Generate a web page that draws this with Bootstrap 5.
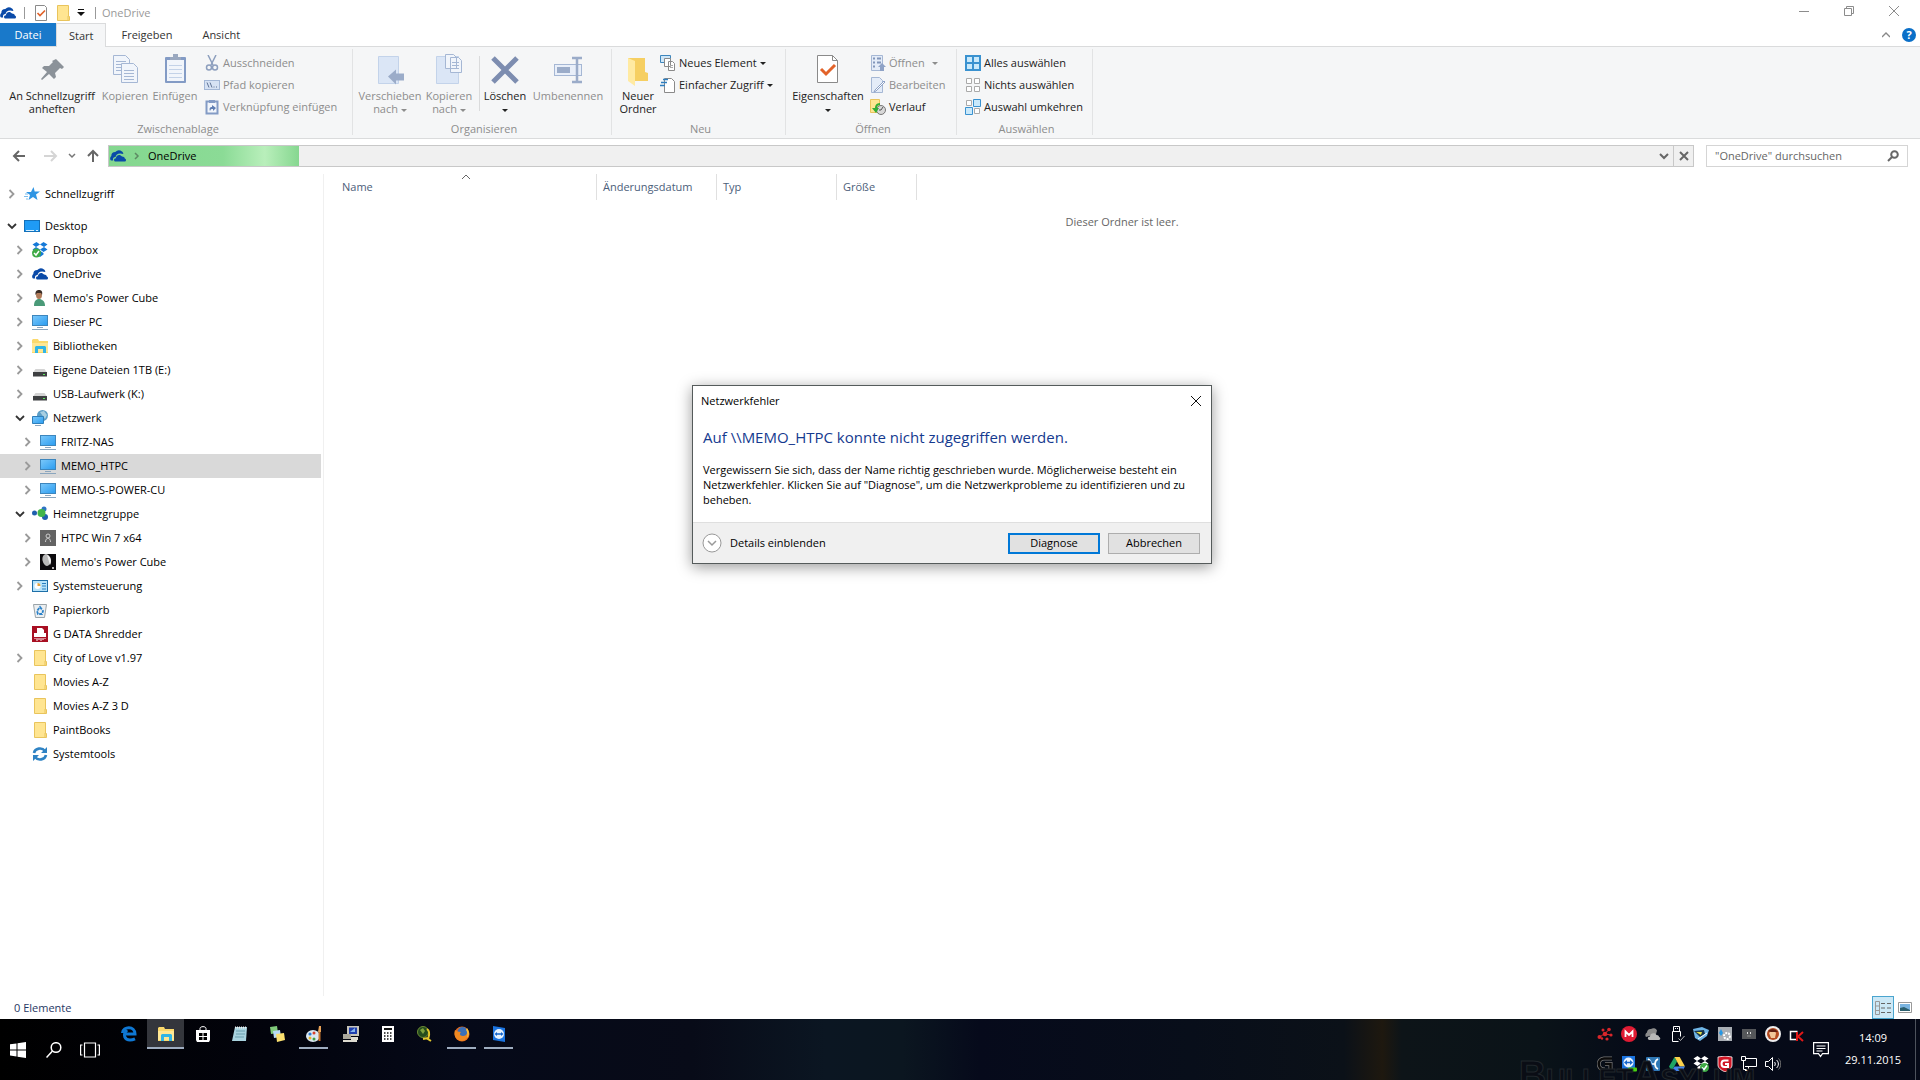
<!DOCTYPE html>
<html lang="de">
<head>
<meta charset="utf-8">
<meta name="viewport" content="width=device-width, initial-scale=1">
<title>OneDrive</title>
<link href="https://cdn.jsdelivr.net/npm/bootstrap@5.3.0/dist/css/bootstrap.min.css" rel="stylesheet">
<style>
body{font-family:"Open Sans","Noto Sans",sans-serif;font-size:11px;line-height:16px;color:#000;background:#fff;height:100vh;overflow:hidden}
svg{flex:none;display:block}
button{background:none;border:0;padding:0;color:inherit;font:inherit}
a{color:inherit;text-decoration:none}
.i16{width:16px;height:16px}
.i32{width:32px;height:32px}
/* title bar and tabs */
.title-strip{height:23px}
.quick{gap:8px;padding-top:2px}
.quick-tools{gap:6px}
.qsep{width:1px;height:12px;background:#999}
.title-text{color:#999}
.win-btn{width:45px;height:21px;display:flex;align-items:center;justify-content:center}
.tab-strip{height:24px;border-bottom:1px solid #dadbdc}
.tab-item{height:24px;padding:0 15px;line-height:23px;color:#333}
.tab-file{width:56px;padding:0;text-align:center;background:#1979ca;color:#fff;height:23px}
.tab-open{padding:0 12px;background:#f5f6f7;border:1px solid #dadbdc;border-bottom:0}
.tab-tools{gap:12px}
/* ribbon */
.ribbon{background:#f5f6f7;height:92px;border-bottom:1px solid #dadbdc;color:#222}
.rgroup{border-right:1px solid #e2e3e4;margin:2px 0 3px;padding-left:4px;display:flex;flex-direction:column;justify-content:space-between}
.rgroup-name{color:#8d8d8d;text-align:center;line-height:13px}
.big-btn{padding-top:5px;line-height:13px;display:flex;flex-direction:column;align-items:center;gap:3px;text-align:center}
.w96{width:96px}.w76{width:76px}.w66{width:66px}.w52{width:52px}.w50{width:50px}.w44{width:44px}
.small-col{padding-top:3px}
.small-btn{height:22px;display:flex;align-items:center;gap:3px;white-space:nowrap}
.off{color:#8d8d8d}
.gw1{width:353px}.gw2{width:259px}.gw3{width:174px}.gw4{width:171px}.gw5{width:136px}
.inner-sep{width:1px;height:55px;background:#dadbdc;margin:7px 0 0}
.tri{display:inline-block;border:3px solid transparent;border-top:3px solid currentColor;border-bottom:0;vertical-align:middle}
/* address row */
.addr-row{height:35px;padding:6px 12px 7px 10px}
.addr-box{height:22px;border:1px solid #c8c8c8;background:#f0f0f0}
.addr-fill{width:190px;height:20px;background:linear-gradient(90deg,#84d78f 0,#8bdb96 60%,#b9efbb 82%,#86d790 100%);padding-left:1px;gap:7px}
.nav-btn{width:22px;display:flex;justify-content:center}
.stop-btn{width:20px;border-left:1px solid #c8c8c8;display:flex;align-items:center;justify-content:center}
.search-box{width:202px;height:22px;border:1px solid #d5d5d5;padding:0 8px;margin-left:12px}
.search-box input{border:0;outline:0;width:100%;min-width:0;padding:0;background:none;font:inherit;color:#666}
.search-box input::placeholder{color:#666;opacity:1}
/* tree */
.navpane{flex:none;width:324px;border-right:1px solid #f0f0f0;padding:8px 2px 0 0}
.tree-row{height:24px;display:flex;align-items:center;padding-left:4px;white-space:nowrap}
.lv1{padding-left:12px}.lv2{padding-left:20px}
.tree-row.picked{background:#d9d9d9}
.chev{width:16px;height:16px;margin-right:4px;color:#9a9a9a}
.chev.opened{color:#333}
.tree-row a{padding-left:5px}
/* list */
.filelist{table-layout:fixed;border-collapse:separate;border-spacing:0}
.filelist th{font-weight:400;color:#4c607a;height:26px;padding:0 0 0 6px;border-right:1px solid #e0e0e0;position:relative}
.filelist th:first-child{width:273px;padding-left:18px}
.filelist th:nth-child(2),.filelist th:nth-child(3){width:120px}
.filelist th:nth-child(4){width:80px}
.filelist th:last-child{border:0}
.filelist td{text-align:center;color:#666;padding-top:14px}
.sort{position:absolute;left:136px;top:0}
.statusbar{height:23px;color:#1f3864;padding-left:14px}
.view-btn{width:22px;height:23px;display:flex;align-items:center;justify-content:center}
.view-btn.active{background:#cce8f6;border:1px solid #4aa5cf}
/* dialog */
.dlg{position:absolute;left:692px;top:385px;width:520px;background:#fff;border:1px solid #555b5b;box-shadow:0 3px 14px rgba(0,0,0,.4)}
.dlg-title{height:30px;padding:0 9px 0 8px}
.dlg h1{font-size:15px;line-height:22px;color:#153a8f;margin:0;font-weight:400}
.dlg-text{padding:10px 10px 15px}
.dlg-text p{line-height:15px;margin:14px 0 0}
.dlg-foot{height:41px;background:#f0f0f0;border-top:1px solid #dfdfdf;padding:0 11px 0 9px}
.dlg-btn{width:92px;height:21px;border:1px solid #adadad;background:#e1e1e1}
.dlg-btn.main{border:2px solid #0078d7}
/* taskbar */
.taskbar{height:61px;color:#fff;background:linear-gradient(90deg,#000 0,#02030c 14%,#050918 24%,#080b18 36%,#0b1622 43%,#0b1620 47%,#060a1b 51%,#080e1a 62%,#0b1118 70%,#1e180f 72%,#0d1418 73%,#0a1318 80%,#050a18 86%,#060a18 100%);position:relative}
.sys-btn{flex:none;width:36px;display:flex;align-items:center;justify-content:center}
.apps{height:30px;padding-left:2px}
.app-btn{flex:none;width:37px;display:flex;justify-content:center;padding-top:7px;border-bottom:2px solid transparent}
.app-btn.running{width:29px;margin:0 4px;border-bottom-color:#9fadc0}
.app-btn.current{width:37px;margin:0;background:#34363c}
.tray{flex:none;width:216px}
.tray button{width:24px;height:30px;display:flex;align-items:center;justify-content:center}
.note-btn{margin:0 2px 0 4px}
.wmark{position:absolute;right:165px;bottom:-14px;font:bold 38px/38px "Liberation Sans",sans-serif;font-variant:small-caps;color:#0a0d15;-webkit-text-stroke:1px #20262b}
.clock{width:84px;text-align:center;line-height:22px;padding-top:8px}
.edge-line{width:1px;background:#4d525c;margin-right:4px}
</style>
<script src="https://cdn.jsdelivr.net/npm/bootstrap@5.3.0/dist/js/bootstrap.bundle.min.js"></script>
</head>
<body class="d-flex flex-column">
<svg width="0" height="0" class="position-absolute" aria-hidden="true">
<defs>
<linearGradient id="scr" x1="0" y1="0" x2="1" y2="1"><stop offset="0" stop-color="#7cc9fb"/><stop offset="1" stop-color="#2a9cf0"/></linearGradient>
<symbol id="cloud" viewBox="0 0 16 16"><path d="M1 12.500a3 3 0 0 1 .3-4.500 4 4 0 0 1 4-4A5 5 0 0 1 12 3.500c1 .7 1.300 1.500 1.300 2.500-5-1.500-7.300.5-7.800 3-2.500.3-2.800 2-2.300 3.500z" fill="#0a4aa8"/><path d="M5.500 13.500c-2-.2-2-3.200.4-3.300C6 7 10 5.500 12 8.600c2 0 2.800 1 2.800 2 1.800.4 1.500 2.900-.3 2.900z" fill="#0a4aa8"/></symbol>
<symbol id="gcloud" viewBox="0 0 16 16"><path d="M1 11a3 3 0 0 1 1-4.500A3.500 3.500 0 0 1 6 3a4 4 0 0 1 6 1.500L11 8z" fill="#8c8c8c"/><path d="M4.500 14c-2.500-.5-2-3.500.5-3.500C5 7 10 6 11.500 9c2 0 2.500 1 2.500 2 2 .5 1.500 3-.3 3z" fill="#b8b8b8"/></symbol>
<symbol id="folder" viewBox="0 0 16 16"><path d="M2.500.5h11v11h1v4h-12z" fill="#ffe591" stroke="#e9c45c"/><path d="M13 15.500v-4.500" stroke="#e9c45c"/></symbol>
<symbol id="doccheck" viewBox="0 0 16 16"><path d="M2.500.5h9l2 2v13h-11z" fill="#fff" stroke="#8a8a8a"/><path d="M4.500 8l2.500 2.500 5-5" fill="none" stroke="#e2632a" stroke-width="1.700"/></symbol>
<symbol id="pc" viewBox="0 0 16 16"><rect x=".5" y="1.500" width="15" height="10" fill="url(#scr)" stroke="#3d86bd"/><path d="M5 13.500h6M0 15.500h16" stroke="#8ba6be"/></symbol>
<symbol id="drive" viewBox="0 0 16 16"><path d="M3.500 7h9l2.500 3.500H1z" fill="#d4d4d4"/><rect x="1" y="10" width="14" height="4.500" fill="#3e4042"/><rect x="11" y="12" width="2" height="1" fill="#5fea5f"/></symbol>
<symbol id="cr" viewBox="0 0 16 16"><path d="M5.500 4L9.500 8l-4 4" fill="none" stroke="currentColor" stroke-width="1.800"/></symbol>
<symbol id="cd" viewBox="0 0 16 16"><path d="M4 6l4 4 4-4" fill="none" stroke="currentColor" stroke-width="1.800"/></symbol>
<symbol id="explorer" viewBox="0 0 16 16"><path d="M0 2l1-1h5l1 2h9v12H0z" fill="#fbd96c"/><path d="M0 5h16v9H0z" fill="#ffe795"/><path d="M3 15V9l1-1h9l1 1v6h-3v-4H6v4z" fill="#31b5e6"/></symbol>
<symbol id="dropbx" viewBox="0 0 16 16"><path d="M4.500 0L8 2.500 4 5 .5 2.500zM11.500 0L8 2.500 12 5l3.500-2.500zM4 5l4 2.500L4.500 10 .5 7.500zM12 5l3.500 2.500-4 2.500L8 7.500zM4.500 11L8 8.800l3.500 2.200v1.500L8 15l-3.500-2.500z" fill="currentColor"/></symbol>
</defs>
</svg>

<header>
<div class="title-strip d-flex justify-content-between">
 <div class="quick d-flex align-items-center">
  <svg class="i16"><use href="#cloud"/></svg>
  <span class="qsep"></span>
  <div class="quick-tools d-flex align-items-center">
   <button aria-label="Eigenschaften"><svg class="i16"><use href="#doccheck"/></svg></button>
   <button aria-label="Neuer Ordner"><svg class="i16"><use href="#folder"/></svg></button>
   <button aria-label="Symbolleiste anpassen"><svg width="8" height="8" viewBox="0 0 8 8"><path d="M1 .5h6" stroke="#111"/><path d="M0 3h8L4 7z" fill="#111"/></svg></button>
   <span class="qsep ms-1"></span>
   <span class="title-text">OneDrive</span>
  </div>
 </div>
 <div class="d-flex me-1">
  <button class="win-btn" aria-label="Minimieren"><svg width="10" height="10"><path d="M0 5.500h10" stroke="#8c8c8c"/></svg></button>
  <button class="win-btn" aria-label="Verkleinern"><svg width="10" height="10" fill="none" stroke="#8c8c8c"><path d="M.5 2.500h7v7h-7zM2.500 2.500v-2h7v7h-2"/></svg></button>
  <button class="win-btn" aria-label="Schließen"><svg width="10" height="10" stroke="#8c8c8c"><path d="M0 0l10 10M10 0L0 10"/></svg></button>
 </div>
</div>
<nav class="tab-strip d-flex">
 <a href="#" class="tab-item tab-file">Datei</a>
 <a href="#" class="tab-item tab-open">Start</a>
 <a href="#" class="tab-item">Freigeben</a>
 <a href="#" class="tab-item">Ansicht</a>
 <div class="tab-tools ms-auto d-flex align-items-center pe-1">
  <button aria-label="Menüband minimieren"><svg width="8" height="6"><path d="M0 5l4-4 4 4" fill="none" stroke="#888" stroke-width="1.300"/></svg></button>
  <button aria-label="Hilfe"><svg width="14" height="14"><circle cx="7" cy="7" r="7" fill="#0a6fc8"/><text x="7" y="11" font-size="11" font-weight="700" fill="#fff" text-anchor="middle">?</text></svg></button>
 </div>
</nav>
<div class="ribbon d-flex">
 <section class="rgroup gw1">
  <div class="d-flex">
   <button class="big-btn w96"><svg class="i32" viewBox="0 0 32 32"><path d="M20 5l8 8-2 2-2-1-5 5 1 4-2 2-5-5-7 6-1-1 6-7-5-4 2-2h5l4-4-1-1z" fill="#8b9299"/></svg>An Schnellzugriff anheften</button>
   <button class="big-btn w50 off"><svg class="i32" viewBox="0 0 32 32" fill="#f1f5fb" stroke="#a5b7d4"><path d="M4.500 1.500h12l4 4v15h-16z"/><path d="M7 7.500h10M7 10.500h10M7 13.500h10M7 16.500h10"/><path d="M12.500 9.500h12l4 4v15h-16z"/><path d="M15 16.500h10M15 19.500h10M15 22.500h10M15 25.500h10"/></svg>Kopieren</button>
   <button class="big-btn w50 off"><svg class="i32" viewBox="0 0 32 32"><rect x="6" y="3" width="21" height="26" rx="1" fill="#839bc5"/><path d="M8 6h17v21H8z" fill="#f1f5fb"/><path d="M11 6V3h3V0h5v3h3v3z" fill="#9aa8bf"/><path d="M10 11.500h13M10 15.500h13M10 19.500h13M10 23.500h13" stroke="#c3d2e8"/></svg>Einfügen</button>
   <div class="small-col ps-1">
    <button class="small-btn off"><svg class="i16" viewBox="0 0 16 16" fill="none" stroke="#8d9fbe" stroke-width="1.500"><path d="M4 0l5 10M12 0L7 10"/><circle cx="5" cy="12.500" r="2.500"/><circle cx="11" cy="12.500" r="2.500"/></svg>Ausschneiden</button>
    <button class="small-btn off"><svg class="i16" viewBox="0 0 16 16"><rect x=".5" y="3.500" width="15" height="9" fill="#d6e2f4" stroke="#a3b7d6"/><path d="M3 5.500l2 5M6 5.500l2 5M9.500 10h1M12 10h1" stroke="#5f7396"/></svg>Pfad kopieren</button>
    <button class="small-btn off"><svg class="i16" viewBox="0 0 16 16"><path d="M2.500 2.500h11v12h-11z" fill="#f1f5fb" stroke="#839bc5" stroke-width="2"/><path d="M5 1h6v3H5z" fill="#839bc5"/><path d="M6 12c-1-3 0-4 2-4V6l4 3-3 3v-2c-2 0-2 0-3 2z" fill="#5e7db2"/></svg>Verknüpfung einfügen</button>
   </div>
  </div>
  <div class="rgroup-name">Zwischenablage</div>
 </section>
 <section class="rgroup gw2">
  <div class="d-flex">
   <button class="big-btn w66 off"><svg class="i32" viewBox="0 0 32 32"><path d="M4.500 2.500h20v27h-20z" fill="#dbe6f6" stroke="#c3d3ea"/><path d="M14 22.500l8-7v4h8v7h-8v4z" fill="#9bacc9"/></svg><span>Verschieben nach <i class="tri"></i></span></button>
   <button class="big-btn w52 off"><svg class="i32" viewBox="0 0 32 32" stroke="#a5b7d4"><path d="M3.500 2.500h22v27h-22z" fill="#dbe6f6" stroke="#c3d3ea"/><path d="M12.500.5h8l3 3v11h-11zM17.500 3.500h8l3 3v12h-11z" fill="#f1f5fb"/><path d="M19 8.500h7M19 11.500h7M19 14.500h7" /></svg><span>Kopieren nach <i class="tri"></i></span></button>
   <span class="inner-sep ms-1"></span>
   <button class="big-btn w50"><svg class="i32" viewBox="0 0 32 32"><path d="M4 4l24 24M28 4L4 28" stroke="#7d8db0" stroke-width="5"/></svg><span>Löschen<br><i class="tri"></i></span></button>
   <button class="big-btn w76 off"><svg class="i32" viewBox="0 0 32 32"><rect x="2.500" y="10.500" width="27" height="11" fill="#e9eff9" stroke="#a5b7d4"/><rect x="5" y="13" width="13" height="6" fill="#9bacc9"/><path d="M20 4h10M20 28h10M25 4v24" stroke="#9bacc9" stroke-width="2.500"/></svg>Umbenennen</button>
  </div>
  <div class="rgroup-name">Organisieren</div>
 </section>
 <section class="rgroup gw3">
  <div class="d-flex">
   <button class="big-btn w44"><svg class="i32" viewBox="0 0 32 32"><path d="M6 4h17v14l3 1v8H6z" fill="#f6cf62"/><path d="M6 4l7 3v25l-7-5z" fill="#ffeaa2"/></svg>Neuer Ordner</button>
   <div class="small-col">
    <button class="small-btn"><svg class="i16" viewBox="0 0 16 16"><path d="M.5.500h10v7H.5z" fill="#cfe7f8" stroke="#3d86bd"/><path d="M4.500 3.500h6v8h-6zM8.500 6.500h4l2 2v7h-6z" fill="#fff" stroke="#8a8a8a"/><path d="M10 10.500h3M10 12.500h3" stroke="#aaa"/></svg>Neues Element <i class="tri"></i></button>
    <button class="small-btn"><svg class="i16" viewBox="0 0 16 16"><path d="M4.500 1.500h7l3 3v11h-10z" fill="#fff" stroke="#8a8a8a"/><path d="M3 2.500h5M1 5.500h6M0 8.500h5" stroke="#2f7fc0" stroke-width="1.500"/></svg>Einfacher Zugriff <i class="tri"></i></button>
   </div>
  </div>
  <div class="rgroup-name">Neu</div>
 </section>
 <section class="rgroup gw4">
  <div class="d-flex">
   <button class="big-btn w76"><svg class="i32" viewBox="0 0 32 32"><path d="M5.500 1.500h15l5 5v22h-20z" fill="#fff" stroke="#8a8a8a"/><path d="M20.500 1.500v5h5" fill="none" stroke="#8a8a8a"/><path d="M9 15l5 5 9-9" fill="none" stroke="#e2632a" stroke-width="3"/></svg><span>Eigenschaften<br><i class="tri"></i></span></button>
   <div class="small-col ps-1">
    <button class="small-btn off"><svg class="i16" viewBox="0 0 16 16"><path d="M1.500.5h11v15h-11z" fill="#e4ecf8" stroke="#a5b7d4"/><path d="M3 3.500h2M7 3.500h4M3 7.500h2M7 7.500h4M3 11.500h2" stroke="#8296ba" stroke-width="2"/><path d="M8 12l4-4 4 4h-2v4h-4v-4z" fill="#8ea2c6"/></svg>Öffnen <i class="tri ms-1"></i></button>
    <button class="small-btn off"><svg class="i16" viewBox="0 0 16 16"><path d="M1.500.5h8l3 3v12h-11z" fill="#e4ecf8" stroke="#a5b7d4"/><path d="M15 5l-9 9-2 1 1-2 9-9z" fill="#fff" stroke="#8ea2c6"/></svg>Bearbeiten</button>
    <button class="small-btn"><svg class="i16" viewBox="0 0 16 16"><path d="M.5.500h9v13h-9z" fill="#ffe591" stroke="#e9c45c"/><circle cx="11" cy="11" r="4.500" fill="#d8d8d8" stroke="#777"/><path d="M11 11l2-3M11 11H9" stroke="#555"/><path d="M10 4C6 4 5 7 5 9H2l4 5 3-5H7c0-2 1-3 3-3z" fill="#35ad35"/></svg>Verlauf</button>
   </div>
  </div>
  <div class="rgroup-name">Öffnen</div>
 </section>
 <section class="rgroup gw5">
  <div class="small-col ps-1">
   <button class="small-btn"><svg class="i16" viewBox="0 0 16 16"><path d="M1 1h14v14H1zM8 1v14M1 8h14" fill="#c9e9fb" stroke="#3a92d0" stroke-width="2"/></svg>Alles auswählen</button>
   <button class="small-btn"><svg class="i16" viewBox="0 0 16 16"><path d="M1.500 1.500h5v5h-5zM9.500 1.500h5v5h-5zM1.500 9.500h5v5h-5zM9.500 9.500h5v5h-5z" fill="#fff" stroke="#aaa"/></svg>Nichts auswählen</button>
   <button class="small-btn"><svg class="i16" viewBox="0 0 16 16"><path d="M1.500 1.500h5v5h-5zM9.500 9.500h5v5h-5z" fill="#fff" stroke="#aaa"/><path d="M8.500.5h7v7h-7zM.5 8.500h7v7h-7z" fill="#c9e9fb" stroke="#3a92d0"/></svg>Auswahl umkehren</button>
  </div>
  <div class="rgroup-name">Auswählen</div>
 </section>
</div>
</header>

<div class="addr-row d-flex align-items-center">
 <button class="me-3" aria-label="Zurück"><svg width="18" height="16" fill="none" stroke="#666" stroke-width="2"><path d="M15 8H4M9 3L4 8l5 5"/></svg></button>
 <button class="me-2" aria-label="Vorwärts"><svg width="14" height="16" fill="none" stroke="#d5d5d5" stroke-width="2"><path d="M0 8h11M7 3l5 5-5 5"/></svg></button>
 <button aria-label="Verlauf"><svg width="12" height="16" fill="none" stroke="#777" stroke-width="1.500"><path d="M3 6l3 3 3-3"/></svg></button>
 <button class="nav-btn ms-1 me-1" aria-label="Nach oben"><svg width="14" height="16" fill="none" stroke="#666" stroke-width="2"><path d="M7 14V3M2 8l5-5 5 5"/></svg></button>
 <div class="addr-box d-flex flex-fill">
  <div class="addr-fill d-flex align-items-center"><svg class="i16"><use href="#cloud"/></svg><svg width="8" height="16" fill="none" stroke="#5d8a63" stroke-width="1.500"><path d="M2 5l3 3-3 3"/></svg><a href="#">OneDrive</a></div>
  <button class="ms-auto me-1" aria-label="Verlauf der Adressleiste"><svg width="10" height="8" fill="none" stroke="#666" stroke-width="2"><path d="M1 2l4 4 4-4"/></svg></button>
  <button class="stop-btn" aria-label="Laden abbrechen"><svg width="10" height="10" stroke="#666" stroke-width="2"><path d="M1 1l8 8M9 1L1 9"/></svg></button>
 </div>
 <label class="search-box d-flex align-items-center"><input type="text" aria-label="OneDrive durchsuchen" placeholder="&quot;OneDrive&quot; durchsuchen"><svg width="12" height="12" fill="none" stroke="#666" stroke-width="2"><circle cx="7.500" cy="4.500" r="3.300"/><path d="M5 7l-4 4"/></svg></label>
</div>

<main class="d-flex flex-fill">
<ul class="navpane list-unstyled mb-0">
 <li class="tree-row mb-2"><svg class="chev"><use href="#cr"/></svg><svg class="i16" viewBox="0 0 16 16"><path d="M9.500 1l1.200 4.500H16l-4 3 1.500 5.500-4.500-3-4.500 3L6 9 2 6h5z" fill="#2f95e3"/><path d="M1 8h3M0 10.500h4M2 13h2" stroke="#7dbdec"/></svg><a href="#">Schnellzugriff</a></li>
 <li class="tree-row"><svg class="chev opened"><use href="#cd"/></svg><svg class="i16" viewBox="0 0 16 16"><rect x=".5" y="2.500" width="15" height="11" fill="#1f9bf5" stroke="#1470b8"/><path d="M2 12.500h8M12 12.500h2" stroke="#d8f0ff"/></svg><a href="#">Desktop</a></li>
 <li class="tree-row lv1"><svg class="chev"><use href="#cr"/></svg><svg class="i16" viewBox="0 0 16 16"><g color="#1579d8"><use href="#dropbx" width="16" height="16"/></g><circle cx="4.500" cy="11" r="4.500" fill="#3fab46"/><path d="M2 11l2 2 3-4" fill="none" stroke="#fff" stroke-width="1.500"/></svg><a href="#">Dropbox</a></li>
 <li class="tree-row lv1"><svg class="chev"><use href="#cr"/></svg><svg class="i16"><use href="#cloud"/></svg><a href="#">OneDrive</a></li>
 <li class="tree-row lv1"><svg class="chev"><use href="#cr"/></svg><svg class="i16" viewBox="0 0 16 16"><path d="M2 16c0-5 2-7 5-7s6 2 6 7z" fill="#4a9a78"/><ellipse cx="7" cy="5" rx="3" ry="4" fill="#b07a58"/><path d="M3.500 5C3 1 5 0 7 0s4 1 3 5L9 3H5z" fill="#3a2c25"/></svg><a href="#">Memo's Power Cube</a></li>
 <li class="tree-row lv1"><svg class="chev"><use href="#cr"/></svg><svg class="i16"><use href="#pc"/></svg><a href="#">Dieser PC</a></li>
 <li class="tree-row lv1"><svg class="chev"><use href="#cr"/></svg><svg class="i16"><use href="#explorer"/></svg><a href="#">Bibliotheken</a></li>
 <li class="tree-row lv1"><svg class="chev"><use href="#cr"/></svg><svg class="i16"><use href="#drive"/></svg><a href="#">Eigene Dateien 1TB (E:)</a></li>
 <li class="tree-row lv1"><svg class="chev"><use href="#cr"/></svg><svg class="i16"><use href="#drive"/></svg><a href="#">USB-Laufwerk (K:)</a></li>
 <li class="tree-row lv1"><svg class="chev opened"><use href="#cd"/></svg><svg class="i16" viewBox="0 0 16 16"><circle cx="10.500" cy="5.500" r="5.500" fill="#5d9ec6"/><path d="M8 2l4-1 3 4-2 4" fill="#a8cfe2"/><path d="M.5 6.500h11v7H.5z" fill="url(#scr)" stroke="#2f7fba"/><path d="M3 15.500h6" stroke="#8ba6be"/></svg><a href="#">Netzwerk</a></li>
 <li class="tree-row lv2"><svg class="chev"><use href="#cr"/></svg><svg class="i16"><use href="#pc"/></svg><a href="#">FRITZ-NAS</a></li>
 <li class="tree-row lv2 picked"><svg class="chev"><use href="#cr"/></svg><svg class="i16"><use href="#pc"/></svg><a href="#">MEMO_HTPC</a></li>
 <li class="tree-row lv2"><svg class="chev"><use href="#cr"/></svg><svg class="i16"><use href="#pc"/></svg><a href="#">MEMO-S-POWER-CU</a></li>
 <li class="tree-row lv1"><svg class="chev opened"><use href="#cd"/></svg><svg class="i16" viewBox="0 0 16 16"><circle cx="2.500" cy="7" r="2.500" fill="#1f5fae"/><circle cx="12" cy="3" r="2.500" fill="#2d74c4"/><circle cx="13" cy="11" r="3" fill="#1f5fae"/><circle cx="9.500" cy="7" r="4" fill="#41b54a"/></svg><a href="#">Heimnetzgruppe</a></li>
 <li class="tree-row lv2"><svg class="chev"><use href="#cr"/></svg><svg class="i16" viewBox="0 0 16 16"><path d="M0 0h16v16H0z" fill="#636363"/><circle cx="8" cy="6" r="2" fill="none" stroke="#ccc"/><path d="M5.500 12c0-5 5-5 5 0" fill="none" stroke="#ccc"/></svg><a href="#">HTPC Win 7 x64</a></li>
 <li class="tree-row lv2"><svg class="chev"><use href="#cr"/></svg><svg class="i16" viewBox="0 0 16 16"><path d="M0 0h16v16H0z" fill="#0c0a0d"/><ellipse cx="6.500" cy="6" rx="4" ry="6" fill="#b9b9b9" transform="rotate(-12 6.500 6)"/><path d="M7 1c4 1 5 6 3 10" fill="#eee"/><circle cx="13" cy="14" r="1" fill="#eee"/></svg><a href="#">Memo's Power Cube</a></li>
 <li class="tree-row lv1"><svg class="chev"><use href="#cr"/></svg><svg class="i16" viewBox="0 0 16 16"><rect x=".5" y="2.500" width="15" height="11" fill="#b7e3fa" stroke="#1d6fa8"/><circle cx="5.500" cy="8" r="3" fill="#fff"/><path d="M5.500 8V5a3 3 0 0 1 3 3z" fill="#e6a33b"/><path d="M10 5.500h4M10 8h4M10 11h4" stroke="#2a7fc0"/></svg><a href="#">Systemsteuerung</a></li>
 <li class="tree-row lv1"><span class="chev"></span><svg class="i16" viewBox="0 0 16 16"><path d="M1.500 2.500h13l-2 13h-9z" fill="#eceff1" stroke="#9aa3a8"/><path d="M8 5l3 4-1 3H6L5 9z" fill="none" stroke="#2b82c9" stroke-width="1.800" stroke-dasharray="3 1"/></svg><a href="#">Papierkorb</a></li>
 <li class="tree-row lv1"><span class="chev"></span><svg class="i16" viewBox="0 0 16 16"><path d="M0 0h16v16H0z" fill="#a80f22"/><path d="M5 2h5l2 2v3h2v4H2V7h3z" fill="#fff"/><path d="M3 12v1M5 12v3M7 12v2M9 12v3M11 12v2M13 12v1" stroke="#fff"/></svg><a href="#">G DATA Shredder</a></li>
 <li class="tree-row lv1"><svg class="chev"><use href="#cr"/></svg><svg class="i16"><use href="#folder"/></svg><a href="#">City of Love v1.97</a></li>
 <li class="tree-row lv1"><span class="chev"></span><svg class="i16"><use href="#folder"/></svg><a href="#">Movies A-Z</a></li>
 <li class="tree-row lv1"><span class="chev"></span><svg class="i16"><use href="#folder"/></svg><a href="#">Movies A-Z 3 D</a></li>
 <li class="tree-row lv1"><span class="chev"></span><svg class="i16"><use href="#folder"/></svg><a href="#">PaintBooks</a></li>
 <li class="tree-row lv1"><span class="chev"></span><svg class="i16" viewBox="0 0 16 16" fill="none" stroke="#2f83c4" stroke-width="2.600"><path d="M2 7c1-5 8-6 11-2M14 9c-1 5-8 6-11 2"/><path d="M15 1v6H9zM1 15V9h6z" fill="#2f83c4" stroke="none"/></svg><a href="#">Systemtools</a></li>
</ul>
<div class="flex-fill">
 <table class="filelist w-100">
  <thead><tr><th>Name<svg class="sort" width="12" height="6"><path d="M2 5l4-4 4 4" fill="none" stroke="#666"/></svg></th><th>Änderungsdatum</th><th>Typ</th><th>Größe</th><th></th></tr></thead>
  <tbody><tr><td colspan="5">Dieser Ordner ist leer.</td></tr></tbody>
 </table>
</div>
</main>

<footer class="statusbar d-flex align-items-center">
 <span>0 Elemente</span>
 <div class="ms-auto d-flex me-1">
  <button class="view-btn active" aria-label="Details"><svg width="16" height="14" fill="none"><path d="M.5.500h4v13h-4zM.5 5h4M.5 9.500h4" stroke="#999"/><path d="M6 2.500h4M12 2.500h4M6 7h4M12 7h4M6 11.500h4M12 11.500h4" stroke="#666"/></svg></button>
  <button class="view-btn" aria-label="Große Symbole"><svg width="14" height="11"><path d="M.5.500h13v10H.5z" fill="#fff" stroke="#999"/><path d="M2 2h10v7H2z" fill="#7ab4e0"/><path d="M2 6l4-1 6 3v1H2z" fill="#2b5f6e"/></svg></button>
 </div>
</footer>

<div class="taskbar d-flex overflow-hidden">
 <span class="wmark" aria-hidden="true">BulletAsylum</span>
 <button class="sys-btn" aria-label="Start"><svg class="i16" viewBox="0 0 16 16" fill="#fff"><path d="M0 2.300L6.500 1.400v6H0zM7.500 1.200L16 0v7.400H7.500zM0 8.400h6.500v6.100L0 13.600zM7.500 8.400H16V16l-8.500-1.200z"/></svg></button>
 <button class="sys-btn" aria-label="Suchen"><svg class="i16" viewBox="0 0 16 16" fill="none" stroke="#fff" stroke-width="1.500"><circle cx="10" cy="5.500" r="4.800"/><path d="M6.500 9L.5 15.500"/></svg></button>
 <button class="sys-btn" aria-label="Taskansicht"><svg width="20" height="16" fill="none" stroke="#fff" stroke-width="1.200"><path d="M4.500 1h11v14h-11zM2.500 3H.6v10h1.900M17.500 3h1.900v10h-1.900"/></svg></button>
 <div class="apps d-flex">
  <button class="app-btn" aria-label="Edge"><svg class="i16" viewBox="0 0 16 16" fill="none" stroke="#0f78d4" stroke-width="3"><path d="M1.500 7C2 0 14-.5 14 8H5"/><path d="M6 4c-5 5-2 10 3 10 2 0 3.500-.5 5-1.200"/></svg></button>
  <button class="app-btn running current" aria-label="Explorer"><svg class="i16"><use href="#explorer"/></svg></button>
  <button class="app-btn" aria-label="Store"><svg class="i16" viewBox="0 0 16 16"><path d="M5 5V2.500C5 0 11 0 11 2.500V5" fill="none" stroke="#fff"/><path d="M1 4h14v10l-1 2H2l-1-2z" fill="#fff"/><path d="M4 7h3.500v3H4zM8.500 7H12v3H8.500zM4 11h3.500v3H4zM8.500 11H12v3H8.500z" fill="#000"/></svg></button>
  <button class="app-btn" aria-label="Editor"><svg class="i16" viewBox="0 0 16 16"><path d="M3 1h12l-1 14H0z" fill="#a9d3df"/><path d="M4 5h9M4 8h9M3 11h9" stroke="#6b9fae"/><path d="M3 1.500h12" stroke="#eee" stroke-width="2" stroke-dasharray="1 1"/></svg></button>
  <button class="app-btn" aria-label="Kurznotizen"><svg class="i16" viewBox="0 0 16 16"><path d="M1 1l7-1 1 7-7 1z" fill="#7fca7a"/><path d="M4 5l7-1 1 7-7 1z" fill="#b9dcf5"/><path d="M7 8l8-1 1 7-8 2z" fill="#fbe06f"/></svg></button>
  <button class="app-btn running" aria-label="Paint"><svg class="i16" viewBox="0 0 16 16"><ellipse cx="7" cy="10" rx="7" ry="6" fill="#dbe7f1"/><circle cx="4" cy="8" r="1.600" fill="#2b7cd0"/><circle cx="8" cy="7" r="1.500" fill="#d8402b"/><circle cx="4" cy="12" r="1.500" fill="#e8b42a"/><circle cx="8" cy="13" r="1.500" fill="#3e9e45"/><path d="M13.500 15V6" stroke="#c9752c" stroke-width="2"/><path d="M12 6l1-6h2v6z" fill="#e8a257"/></svg></button>
  <button class="app-btn" aria-label="Remotedesktop"><svg class="i16" viewBox="0 0 16 16"><path d="M4 0h12v10H4z" fill="#c9c6bb"/><path d="M6 1.500h8v6.500H6z" fill="#203fae"/><path d="M7 6l5-4v4z" fill="#86b5f0"/><path d="M0 8h8v5H0z" fill="#aaa89d"/><path d="M0 14h14v2H0zM8 11h7v3H8z" fill="#dedbd0"/></svg></button>
  <button class="app-btn" aria-label="Rechner"><svg class="i16" viewBox="0 0 16 16"><path d="M2 0h12v16H2z" fill="#fff"/><path d="M4 2h8v2H4z" fill="#111"/><path d="M4 7h8M4 10h8M4 13h8" stroke="#111" stroke-width="1.500" stroke-dasharray="1.500 1.500"/></svg></button>
  <button class="app-btn" aria-label="Suchprogramm"><svg class="i16" viewBox="0 0 16 16"><circle cx="6" cy="6" r="5.500" fill="#244c1d" stroke="#6c8a34"/><path d="M3 4l3-2 2 3-2 3z" fill="#7da13d"/><path d="M10 3c4 3 2 7 1 10l3 2M6 13l5-1" fill="none" stroke="#e3c82c" stroke-width="2"/></svg></button>
  <button class="app-btn running" aria-label="Firefox"><svg class="i16" viewBox="0 0 16 16"><circle cx="8" cy="8" r="7.500" fill="#e66a1c"/><circle cx="8.500" cy="6" r="5" fill="#3b70b8"/><path d="M1 4c2 1 3 2 6 2-2 2-1 4 2 4 2 0 4-1 4-3 2 5-2 8-5 8C3 15-1 10 1 4z" fill="#f08a22"/><path d="M13 2c3 4 2 8 0 10 1-4 0-7-1-8z" fill="#ffc63a"/></svg></button>
  <button class="app-btn running" aria-label="TeamViewer"><svg class="i16" viewBox="0 0 16 16"><path d="M2 0l12 2v14L2 14z" fill="#1b74e0"/><circle cx="8" cy="8" r="5" fill="#e7f2fd"/><path d="M3.500 8L6 6v1.200h4V6l2.500 2L10 10V8.800H6V10z" fill="#1565cc"/></svg></button>
 </div>
 <div class="tray ms-auto d-flex flex-wrap align-content-start">
  <button aria-label="Tray 1"><svg class="i16" viewBox="0 0 16 16" fill="#d8262b"><circle cx="8" cy="8" r="2.300"/><circle cx="2.500" cy="11" r="2"/><circle cx="12" cy="3.500" r="1.800"/><circle cx="14" cy="9" r="1.600"/><circle cx="6" cy="4" r="1.500"/><circle cx="10" cy="13" r="1.600"/><circle cx="5" cy="12.500" r="1.200"/><path d="M3 11l9-7M8 8l6 1" stroke="#d8262b"/></svg></button>
  <button aria-label="Mega"><svg class="i16" viewBox="0 0 16 16"><circle cx="8" cy="8" r="8" fill="#e01b33"/><path d="M4.500 11V5.500L8 9l3.500-3.500V11" fill="none" stroke="#fff" stroke-width="1.800"/></svg></button>
  <button aria-label="OneDrive"><svg class="i16"><use href="#gcloud"/></svg></button>
  <button aria-label="USB"><svg class="i16" viewBox="0 0 16 16" fill="none" stroke="#fff"><path d="M4.500 5V.5h6V5M9.500 15.500h-6v-10h8v5M6 2.500h1M8 2.500h1"/><path d="M9.500 12.500l2 2 4-4.500" stroke="#bbb"/></svg></button>
  <button aria-label="Tray 5"><svg class="i16" viewBox="0 0 16 16"><path d="M0 3l9-2 7 3-2 6-7 5-5-3z" fill="#6fb5e6"/><path d="M1 5l10-1 1 4-5 3z" fill="#16334a"/><path d="M3 6h6l-1 3z" fill="#e5e14a"/><path d="M5 13l9-6" stroke="#fff"/></svg></button>
  <button aria-label="Tray 6"><svg class="i16" viewBox="0 0 16 16"><path d="M1 1h14v14H1z" fill="#a9aeb4"/><path d="M4 3l2 4-2 3-2-3z" fill="#2697e3"/><circle cx="10" cy="10" r="3" fill="none" stroke="#fff" stroke-width="2" stroke-dasharray="2 1"/></svg></button>
  <button aria-label="Tray 7"><svg class="i16" viewBox="0 0 16 16"><path d="M1 3h14v10H1z" fill="#55575a"/><path d="M6 6h1v2H6zM9 6h1v2H9z" fill="#ddd"/><path d="M6 10h4" stroke="#888"/></svg></button>
  <button aria-label="Tray 8"><svg class="i16" viewBox="0 0 16 16"><circle cx="8" cy="8" r="8" fill="#eee"/><circle cx="8" cy="8" r="6" fill="#b34a20"/><path d="M4 7c3-3 6-2 7 0l-1 5H6z" fill="#f0c79a"/><path d="M3 5c4-3 8-2 10 1H6z" fill="#5d1e12"/></svg></button>
  <button aria-label="Tray 9"><svg class="i16" viewBox="0 0 16 16" fill="none"><path d="M8.500 5.500h-7v8h7" stroke="#fff" stroke-width="1.500"/><path d="M8 6v9M14 6l-5 4.500 5 4.500" stroke="#e01818" stroke-width="2"/></svg></button>
  <button aria-label="Logitech"><svg class="i16" viewBox="0 0 16 16" fill="none" stroke="#777" stroke-width="4"><path d="M15 2.500H7C0 3 0 13 7 13.500h1M8 8h5.500v7"/><path d="M15 2.500H7C0 3 0 13 7 13.500h1M8 8h5.500v7" stroke="#0a0a0a" stroke-width="2.500"/></svg></button>
  <button aria-label="TeamViewer"><svg class="i16" viewBox="0 0 16 16"><path d="M1 0h13v14H1z" fill="#1b74e0"/><circle cx="7.500" cy="6.500" r="5" fill="#e7f2fd"/><path d="M3 6.500L6 4v1.700h3V4l3 2.500L9 9V7.300H6V9z" fill="#1565cc"/><rect x="7" y="11.500" width="9" height="4" rx="1" fill="#4ad312"/></svg></button>
  <button aria-label="Tray 12"><svg class="i16" viewBox="0 0 16 16"><rect x="1" y="1" width="14" height="14" rx="1" fill="#2f78b5"/><path d="M3 3c4 2 4 8 0 10M13 3c-4 2-4 8 0 10M6 8h4" fill="none" stroke="#fff" stroke-width="1.700"/></svg></button>
  <button aria-label="Google Drive"><svg class="i16" viewBox="0 0 16 16"><path d="M5.500 1L0 10.500 2.700 15 8 5.500z" fill="#1fa463"/><path d="M5.500 1h5.200L16 10.500h-5.300z" fill="#fdd24b"/><path d="M5.500 10.500H16L13.300 15H2.700z" fill="#4586ea"/></svg></button>
  <button aria-label="Dropbox"><svg class="i16" viewBox="0 0 16 16"><use href="#dropbx" width="16" height="16"/><circle cx="11.500" cy="11.500" r="4.500" fill="#3fab46"/><path d="M9 11.500l2 2 3-4" fill="none" stroke="#fff" stroke-width="1.500"/></svg></button>
  <button aria-label="G Data"><svg class="i16" viewBox="0 0 16 16"><path d="M1 1l7-1 7 1v8c0 3-3 5-7 7-4-2-7-4-7-7z" fill="#d01525" stroke="#fff" stroke-width=".8"/><path d="M11.500 4.500h-4c-4 0-4 6.500 0 6.500H11V8H8" fill="none" stroke="#fff" stroke-width="2"/></svg></button>
  <button aria-label="Netzwerk"><svg class="i16" viewBox="0 0 16 16" fill="none" stroke="#fff"><path d="M5 2.500h10.500v8H4M7.500 10.500v4M4 14.500h8M.5.500h4v4h-4zM2.500 4.500v9h3"/></svg></button>
  <button aria-label="Lautstärke"><svg class="i16" viewBox="0 0 16 16" fill="none" stroke="#fff"><path d="M.5 5.500h3l4-4v13l-4-4h-3zM9.500 6c1 1 1 3 0 4M11.500 4c2.500 2 2.500 6 0 8"/><path d="M13.500 2.500c3 3 3 8 0 11" stroke="#777"/></svg></button>
 </div>
 <button class="note-btn" aria-label="Benachrichtigungen"><svg width="16" height="16" fill="none" stroke="#fff" stroke-width="1.200"><path d="M.6.600h14.800v11H9.500L7.500 14.500l-2-2.900H.6zM3.500 4h9M3.500 6.500h9M3.500 9h6"/></svg></button>
 <div class="clock">14:09<br>29.11.2015</div>
 <span class="edge-line"></span>
</div>

<div class="dlg" role="dialog" aria-labelledby="dlgname">
 <div class="dlg-title d-flex align-items-center justify-content-between"><span id="dlgname">Netzwerkfehler</span><button aria-label="Schließen"><svg width="12" height="12" stroke="#111"><path d="M1 1l10 10M11 1L1 11"/></svg></button></div>
 <div class="dlg-text">
  <h1>Auf \\MEMO_HTPC konnte nicht zugegriffen werden.</h1>
  <p>Vergewissern Sie sich, dass der Name richtig geschrieben wurde. Möglicherweise besteht ein Netzwerkfehler. Klicken Sie auf "Diagnose", um die Netzwerkprobleme zu identifizieren und zu beheben.</p>
 </div>
 <div class="dlg-foot d-flex align-items-center gap-2">
  <button class="d-flex align-items-center gap-2"><svg width="20" height="20" fill="none" stroke="#999"><circle cx="10" cy="10" r="9" fill="#fff"/><path d="M6 8l4 4 4-4" stroke-width="1.500"/></svg>Details einblenden</button>
  <button class="dlg-btn main ms-auto">Diagnose</button>
  <button class="dlg-btn">Abbrechen</button>
 </div>
</div>
</body>
</html>
